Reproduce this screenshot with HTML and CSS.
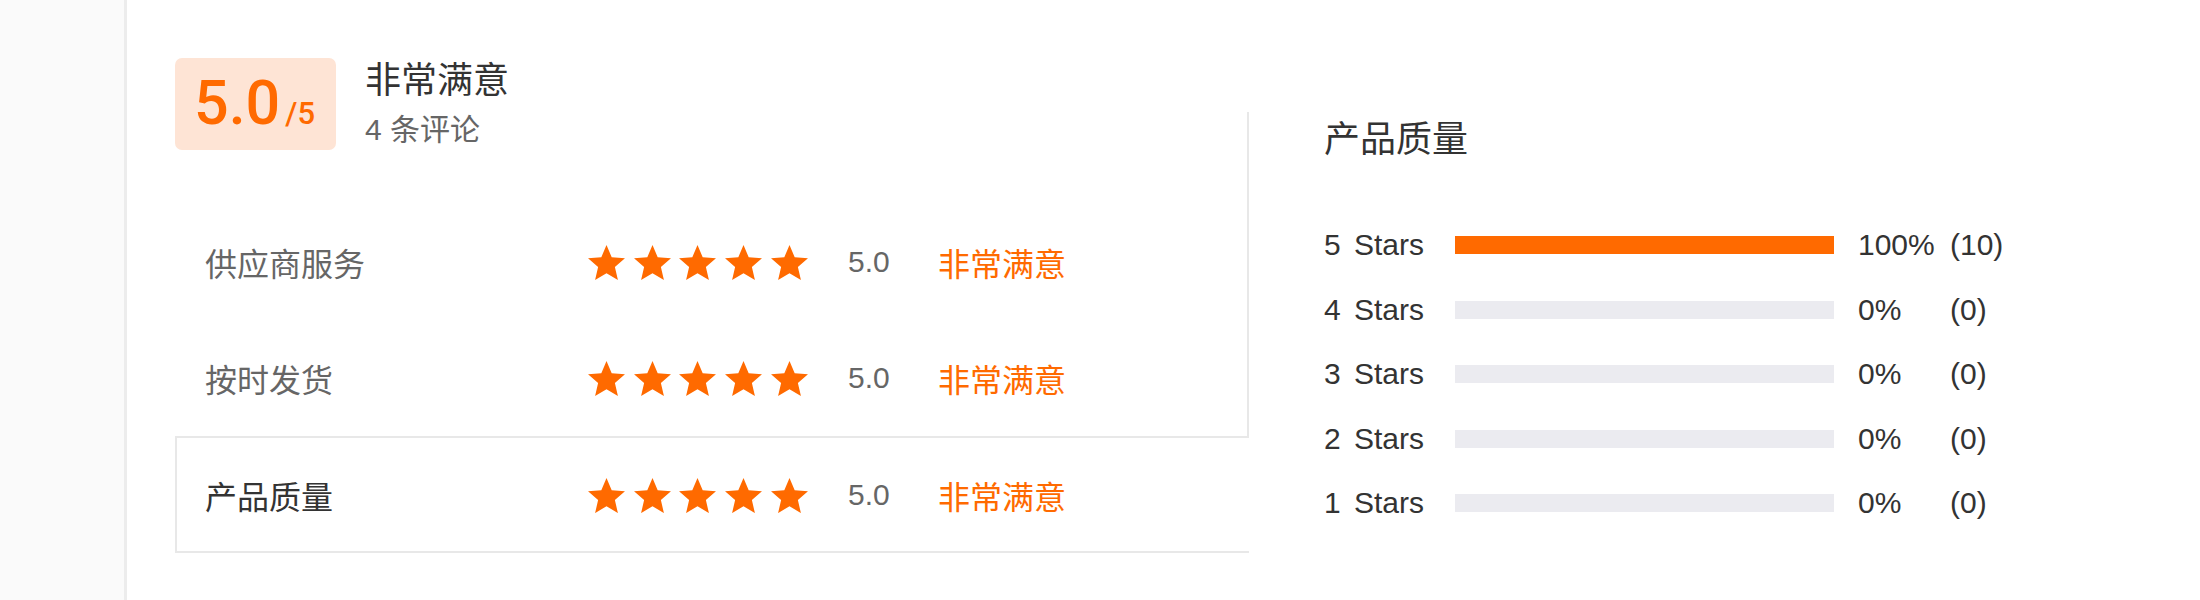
FILE: index.html
```html
<!DOCTYPE html>
<html lang="zh-CN">
<head>
<meta charset="utf-8">
<title>评价</title>
<link rel="stylesheet" href="styles.css">
</head>
<body>
<div class="page">
  <aside class="side"></aside>
  <main class="content">
    <section class="summary">
      <div class="head">
        <div class="badge"><span class="score-wrap"><span class="score">5.0</span><span class="outof">/5</span></span></div>
        <div class="head-text">
          <div class="head-title">非常满意</div>
          <div class="head-sub">4 条评论</div>
        </div>
      </div>
      <div class="list">
        <div class="row">
          <span class="label">供应商服务</span>
          <span class="stars">
            <svg viewBox="2 2 20 19.27"><path d="M12 17.27L18.18 21l-1.64-7.03L22 9.24l-7.19-.61L12 2 9.19 8.63 2 9.24l5.46 4.730L5.82 21z"/></svg>
            <svg viewBox="2 2 20 19.27"><path d="M12 17.27L18.18 21l-1.64-7.03L22 9.24l-7.19-.61L12 2 9.19 8.63 2 9.24l5.46 4.73L5.82 21z"/></svg>
            <svg viewBox="2 2 20 19.27"><path d="M12 17.27L18.18 21l-1.64-7.03L22 9.24l-7.19-.61L12 2 9.19 8.63 2 9.24l5.46 4.73L5.82 21z"/></svg>
            <svg viewBox="2 2 20 19.27"><path d="M12 17.27L18.18 21l-1.64-7.03L22 9.24l-7.19-.61L12 2 9.19 8.63 2 9.24l5.46 4.73L5.82 21z"/></svg>
            <svg viewBox="2 2 20 19.27"><path d="M12 17.27L18.18 21l-1.64-7.03L22 9.24l-7.19-.61L12 2 9.19 8.63 2 9.24l5.46 4.73L5.82 21z"/></svg>
          </span>
          <span class="num">5.0</span>
          <span class="verdict">非常满意</span>
        </div>
        <div class="row">
          <span class="label">按时发货</span>
          <span class="stars">
            <svg viewBox="2 2 20 19.27"><path d="M12 17.27L18.18 21l-1.64-7.03L22 9.24l-7.19-.61L12 2 9.19 8.63 2 9.24l5.46 4.73L5.82 21z"/></svg>
            <svg viewBox="2 2 20 19.27"><path d="M12 17.27L18.18 21l-1.64-7.03L22 9.24l-7.19-.61L12 2 9.19 8.63 2 9.24l5.46 4.73L5.82 21z"/></svg>
            <svg viewBox="2 2 20 19.27"><path d="M12 17.27L18.18 21l-1.64-7.03L22 9.24l-7.19-.61L12 2 9.19 8.63 2 9.24l5.46 4.73L5.82 21z"/></svg>
            <svg viewBox="2 2 20 19.27"><path d="M12 17.27L18.18 21l-1.64-7.03L22 9.24l-7.19-.61L12 2 9.19 8.63 2 9.24l5.46 4.73L5.82 21z"/></svg>
            <svg viewBox="2 2 20 19.27"><path d="M12 17.27L18.18 21l-1.64-7.03L22 9.24l-7.19-.61L12 2 9.19 8.63 2 9.24l5.46 4.73L5.82 21z"/></svg>
          </span>
          <span class="num">5.0</span>
          <span class="verdict">非常满意</span>
        </div>
      </div>
      <div class="row active">
        <span class="label">产品质量</span>
        <span class="stars">
          <svg viewBox="2 2 20 19.27"><path d="M12 17.27L18.18 21l-1.64-7.03L22 9.24l-7.19-.61L12 2 9.19 8.63 2 9.24l5.46 4.73L5.82 21z"/></svg>
          <svg viewBox="2 2 20 19.27"><path d="M12 17.27L18.18 21l-1.64-7.03L22 9.24l-7.19-.61L12 2 9.19 8.63 2 9.24l5.46 4.73L5.82 21z"/></svg>
          <svg viewBox="2 2 20 19.27"><path d="M12 17.27L18.18 21l-1.64-7.03L22 9.24l-7.19-.61L12 2 9.19 8.63 2 9.24l5.46 4.73L5.82 21z"/></svg>
          <svg viewBox="2 2 20 19.27"><path d="M12 17.27L18.18 21l-1.64-7.03L22 9.24l-7.19-.61L12 2 9.19 8.63 2 9.24l5.46 4.73L5.82 21z"/></svg>
          <svg viewBox="2 2 20 19.27"><path d="M12 17.27L18.18 21l-1.64-7.03L22 9.24l-7.19-.61L12 2 9.19 8.63 2 9.24l5.46 4.73L5.82 21z"/></svg>
        </span>
        <span class="num">5.0</span>
        <span class="verdict">非常满意</span>
      </div>
    </section>
    <section class="dist">
      <div class="dist-title">产品质量</div>
      <div class="dist-grid">
        <span class="d-label">5 Stars</span><span class="bar"><span class="fill" style="width:100%"></span></span><span class="pct">100%</span><span class="cnt">(10)</span>
        <span class="d-label">4 Stars</span><span class="bar"><span class="fill" style="width:0%"></span></span><span class="pct">0%</span><span class="cnt">(0)</span>
        <span class="d-label">3 Stars</span><span class="bar"><span class="fill" style="width:0%"></span></span><span class="pct">0%</span><span class="cnt">(0)</span>
        <span class="d-label">2 Stars</span><span class="bar"><span class="fill" style="width:0%"></span></span><span class="pct">0%</span><span class="cnt">(0)</span>
        <span class="d-label">1 Stars</span><span class="bar"><span class="fill" style="width:0%"></span></span><span class="pct">0%</span><span class="cnt">(0)</span>
      </div>
    </section>
  </main>
</div>
</body>
</html>
```
FILE: styles.css
```css
* { box-sizing: border-box; }

html, body {
  margin: 0;
  padding: 0;
  background: #fff;
}

body {
  font-family: "Liberation Sans", "Noto Sans CJK SC", sans-serif;
  color: #333;
}

.page {
  display: flex;
  width: 2200px;
  height: 600px;
  overflow: hidden;
}

.side {
  width: 127px;
  flex: none;
  background: #fafafa;
  border-right: 3px solid #ececec;
}

.content {
  display: flex;
  align-items: flex-start;
  padding-top: 58px;
  padding-left: 48px;
}

.summary {
  width: 1074px;
  flex: none;
}

.head {
  display: flex;
  align-items: flex-start;
  gap: 29px;
}

.badge {
  width: 161px;
  height: 92px;
  background: #fee4d5;
  border-radius: 7px;
  display: flex;
  align-items: center;
  padding-left: 19px;
  padding-top: 14px;
  color: #ff6a00;
  font-family: Roboto, "Liberation Sans", sans-serif;
  font-weight: 500;
}

.score-wrap {
  line-height: 60px;
  white-space: nowrap;
}

.score {
  font-size: 61px;
}

.outof {
  font-size: 31px;
  margin-left: 5px;
}

.head-text {
  margin-top: 1px;
}

.head-title {
  font-size: 36px;
  line-height: 44px;
  color: #333;
}

.head-sub {
  font-size: 30px;
  line-height: 40px;
  margin-top: 7px;
  color: #666;
}

.list {
  margin-top: -38px;
  padding-top: 92px;
  border-right: 2px solid #e8e8e8;
}

.row {
  display: flex;
  align-items: center;
  height: 116px;
  padding-left: 30px;
}

.row.active {
  height: 117px;
  border: 2px solid #e8e8e8;
  border-right: none;
  padding-left: 28px;
}

.label {
  width: 383px;
  flex: none;
  font-size: 32px;
  color: #666;
}

.row.active .label {
  color: #333;
}

.stars {
  display: flex;
  gap: 8.7px;
  width: 220px;
  flex: none;
  margin-top: 2px;
}

.stars svg {
  width: 37px;
  height: 35.6px;
  fill: #ff6a00;
}

.num {
  margin-left: 40px;
  width: 90px;
  flex: none;
  font-size: 30px;
  color: #666;
}

.verdict {
  font-size: 32px;
  color: #ff6a00;
}

.dist {
  padding-left: 75px;
  padding-top: 60px;
}

.dist-title {
  font-size: 36px;
  line-height: 44px;
  color: #333;
}

.dist-grid {
  margin-top: 61px;
  display: grid;
  grid-template-columns: 107px 379px 68px auto;
  column-gap: 24px;
  row-gap: 20.5px;
  align-items: center;
  font-size: 30px;
  line-height: 44px;
  color: #333;
}

.d-label {
  word-spacing: 5px;
  white-space: nowrap;
}

.bar {
  display: block;
  height: 18px;
  background: #ebebf0;
}

.fill {
  display: block;
  height: 100%;
  background: #ff6a00;
}

.pct, .cnt {
  white-space: nowrap;
}
```
